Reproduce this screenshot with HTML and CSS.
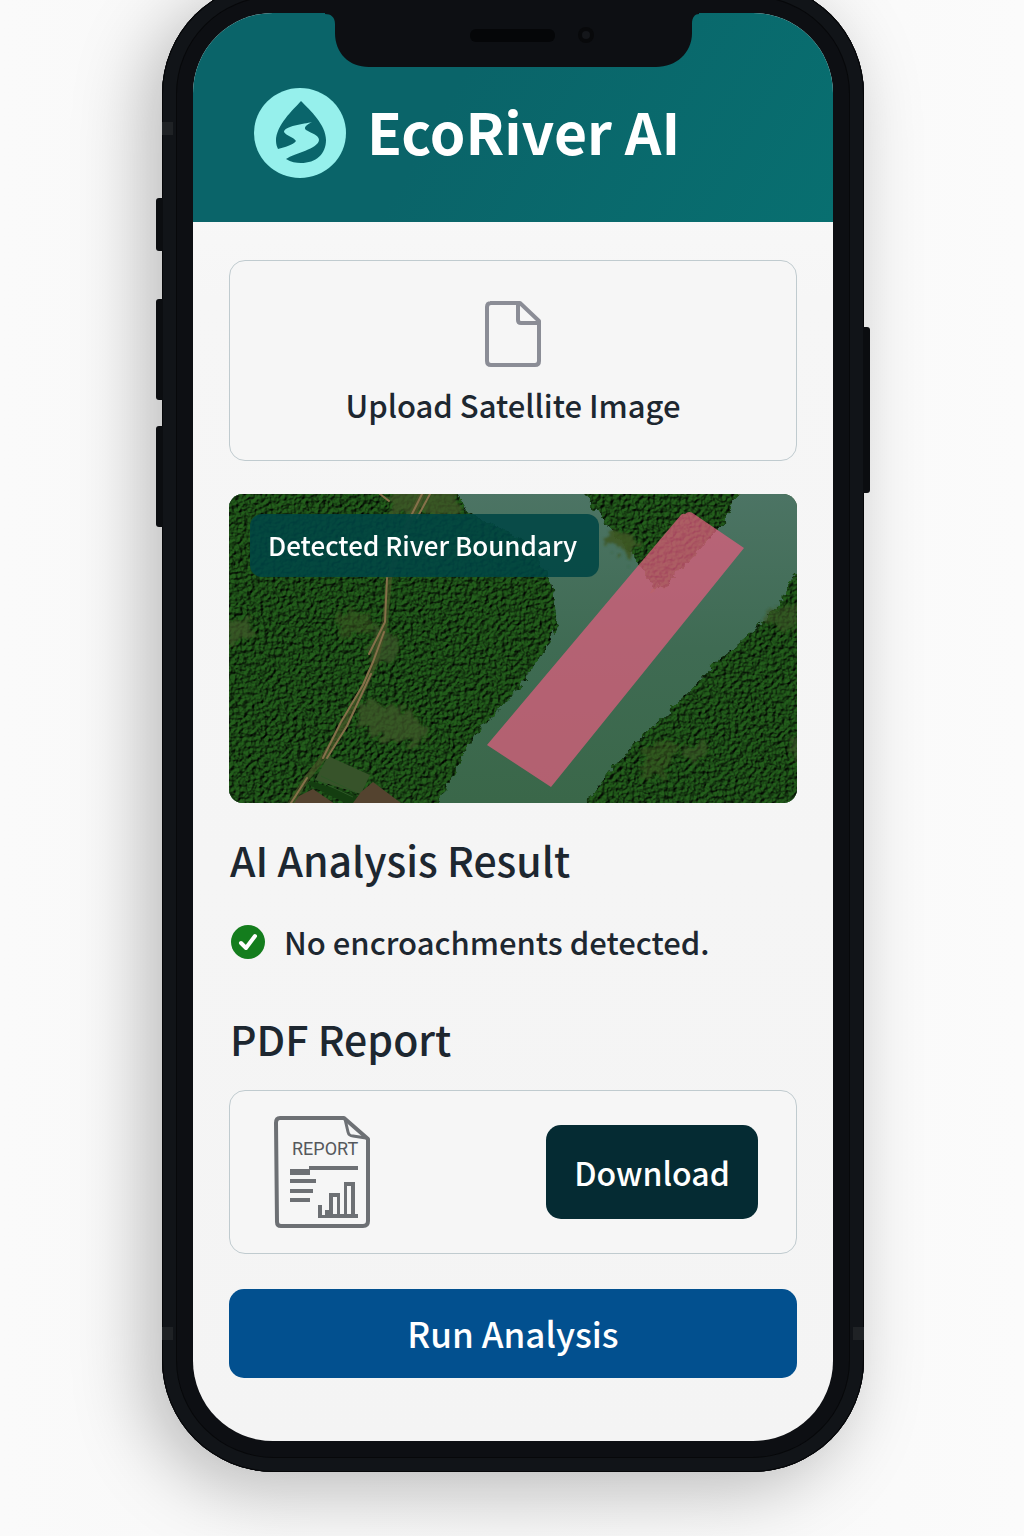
FILE: index.html
```html
<!DOCTYPE html>
<html lang="en">
<head>
<meta charset="utf-8">
<meta name="viewport" content="width=device-width, initial-scale=1">
<title>EcoRiver AI</title>
<link rel="stylesheet" href="styles.css">
</head>
<body>
<div class="phone">
  <span class="key key-mute"></span>
  <span class="key key-up"></span>
  <span class="key key-down"></span>
  <span class="key key-power"></span>
  <span class="band band-top"></span>
  <span class="band band-bottom"></span>
  <span class="band band-right"></span>
  <div class="screen">
    <svg class="notch" viewBox="0 0 374 56" aria-hidden="true">
      <path d="M0 0V1C6 1 10 4 10 11V20C10 40 24 54 44 54H331C351 54 367 40 367 20V11C367 4 370 1 374 1V0Z" fill="#0d0f13"/>
      <rect x="145" y="16" width="85" height="13" rx="6" fill="#050608"/>
      <circle cx="261" cy="22" r="8" fill="#08090b"/>
      <circle cx="261" cy="22" r="4" fill="#14161a"/>
    </svg>
    <header class="header">
      <svg class="logo" viewBox="0 0 94 92" aria-hidden="true">
        <ellipse cx="47" cy="46" rx="46" ry="45" fill="#96f0ec"/>
        <path d="M48 14C40 23 23 38 23 54C23 57 24 60 25 62C32 60 40 58 43 54C41 50 33 49 31 45C31 39 51 37 59 35C54 38 50 40 53 43C58 46 66 48 66 53C65 62 42 66 33 72C38 75 43 76 48 76C63 76 73 67 73 53C73 38 57 23 48 14Z" fill="#0a656b"/>
      </svg>
      <h1 class="brand">EcoRiver AI</h1>
    </header>
    <main class="content">
      <label class="card upload">
        <input class="upload-input" type="file" accept="image/*">
        <svg class="upload-icon" viewBox="0 0 58 68" fill="none" stroke="#8b8d96" stroke-width="4" stroke-linejoin="round" aria-hidden="true">
          <path d="M6 3H36L55 21V61Q55 65 51 65H7Q3 65 3 61V7Q3 3 7 3"/>
          <path d="M34 3V20Q34 23 37 23H54"/>
        </svg>
        <span>Upload Satellite Image</span>
      </label>

      <figure class="map">
        <svg class="map-image" viewBox="0 0 568 309" preserveAspectRatio="xMidYMid slice" role="img" aria-label="Satellite view of the river">
          <defs>
            <filter id="canopy" x="0" y="0" width="100%" height="100%" color-interpolation-filters="sRGB">
              <feTurbulence type="fractalNoise" baseFrequency="0.24" numOctaves="4" seed="8" result="noise"/>
              <feColorMatrix in="noise" type="matrix" values="0 0 0 0 0  0 0 0 0 0  0 0 0 0 0  1 0 0 0 0" result="bump"/>
              <feDiffuseLighting in="bump" surfaceScale="3" lighting-color="#ffffff" result="light"><feDistantLight azimuth="225" elevation="50"/></feDiffuseLighting>
              <feComposite in="SourceGraphic" in2="light" operator="arithmetic" k1="1.3" result="lit"/>
              <feComposite in="lit" in2="SourceGraphic" operator="in"/>
            </filter>
            <filter id="rough" x="-10%" y="-10%" width="120%" height="120%">
              <feTurbulence type="fractalNoise" baseFrequency="0.12" numOctaves="3" seed="3"/>
              <feDisplacementMap in="SourceGraphic" scale="10" xChannelSelector="R" yChannelSelector="G"/>
            </filter>
            <filter id="patch" x="-20%" y="-20%" width="140%" height="140%">
              <feTurbulence type="fractalNoise" baseFrequency="0.1" numOctaves="3" seed="5"/>
              <feDisplacementMap in="SourceGraphic" scale="22" xChannelSelector="R" yChannelSelector="G"/>
              <feGaussianBlur stdDeviation="1"/>
            </filter>
            <linearGradient id="water" x1="0" y1="0" x2="0" y2="1">
              <stop offset="0" stop-color="#4c7464"/><stop offset="0.5" stop-color="#3f6b53"/><stop offset="1" stop-color="#3a6749"/>
            </linearGradient>
          </defs>
          <rect width="568" height="309" fill="url(#water)"/>
          <g filter="url(#rough)" fill="none" stroke="#52703f" stroke-width="3">
            <path d="M326 128L314 154L278 204L244 238L224 274L194 312"/>
            <path d="M421 96L434 91L471 51L491 28L510 -4"/>
          </g>
          <g filter="url(#canopy)"><g filter="url(#rough)" fill="#1b4c14">
            <path d="M-20 -20H218L238 17L300 50L321 83L330 128L318 154L282 204L248 238L228 274L198 330H-20Z"/>
            <path d="M349 -20L355 1L378 31L408 68L425 96L438 91L475 51L495 28L519 -20Z"/>
            <path d="M590 60L566 81L551 108L528 134L488 168L454 204L411 244L381 278L340 330H590Z"/>
          </g></g>
          <g filter="url(#patch)" fill="#3d5626">
            <path d="M166 -8H225L232 20H160Z" opacity=".8"/>
            <path d="M0 122L20 126L24 144L0 148Z" opacity=".75"/>
            <path d="M106 118L144 118L146 138L112 142Z" opacity=".5"/>
            <path d="M148 130L170 146L162 168L140 166Z" opacity=".7"/>
            <path d="M132 206L186 218L200 250L158 246L128 232Z" opacity=".75"/>
            <path d="M374 44L392 34L412 50L400 66Z" opacity=".9"/>
            <path d="M536 116L568 110V136L540 130Z" opacity=".6"/>
            <path d="M414 258L438 242L450 258L436 282L414 284Z" opacity=".5"/>
            <path d="M450 252L480 250L476 264L456 266Z" opacity=".6"/>
            <path d="M558 254L568 244V270Z" opacity=".7"/>
          </g>
          <path d="M99 262L141 281L132 300L86 286Z" fill="#37532a"/>
          <path d="M82 287L132 303L122 312L78 290Z" fill="#143d10"/>
          <path d="M92 282L128 299M88 286L124 303" stroke="#2d5726" fill="none"/>
          <path d="M70 302L84 295L106 310H64Z" fill="#54432f"/>
          <path d="M132 298L144 288L172 309H124Z" fill="#54432f"/>
          <g fill="none" stroke="#86704a" stroke-linecap="round" stroke-linejoin="round">
            <path d="M193 0L178 32L160 84L156 128L146 168L136 191L112 236L94 264L78 284L62 309" stroke="#4f5529" stroke-width="6" opacity=".6"/>
            <path d="M193 0L182 22M201 0L188 24M158 84L156 128L140 160M155 138L144 168L134 191L112 228L94 264M142 180L118 232L98 264M78 284L62 309M151 0L160 7" stroke-width="2"/>
          </g>
          <path d="M456 20Q460 16 465 20L515 54L322 293L258 251L451 22Q453 19 456 20Z" fill="#e25e7f" fill-opacity=".72"/>
        </svg>
        <figcaption class="map-label">Detected River Boundary</figcaption>
      </figure>

      <section class="result">
        <h2 class="title">AI Analysis Result</h2>
        <p class="status">
          <svg class="status-icon" viewBox="0 0 36 36" aria-hidden="true">
            <circle cx="18" cy="18" r="17" fill="#147d1d"/>
            <path d="M11 19L16 24L25 12" fill="none" stroke="#fff" stroke-width="4" stroke-linecap="round" stroke-linejoin="round"/>
          </svg>
          <span>No encroachments detected.</span>
        </p>
      </section>

      <section class="report">
        <h2 class="title">PDF Report</h2>
        <div class="card report-card">
          <svg class="report-icon" viewBox="0 0 98 114" aria-hidden="true">
            <g fill="none" stroke="#6d7074" stroke-width="4" stroke-linejoin="round">
              <path d="M7 3H71L95 24V106Q95 111 90 111H8Q4 111 4 107L3 8Q3 3 7 3Z"/>
              <path d="M72 4L75 17Q76 21 80 21L93 23" stroke-width="3"/>
            </g>
            <text class="report-text" x="19" y="40">REPORT</text>
            <g fill="#6d7074">
              <path d="M17 54H36V51H85V55H37V60H17Z"/>
              <path d="M17 64H43V68H17ZM17 74H40V78H17ZM17 83H37V87H17Z"/>
              <path fill-rule="evenodd" d="M45 90H49V100H52V95H56V78H67V99H71V67H82V99H85V103H45ZM60 82V99H64V82ZM74 71V99H78V71Z"/>
            </g>
          </svg>
          <button class="button download" type="button">Download</button>
        </div>
      </section>

      <button class="button run" type="button">Run Analysis</button>
    </main>
  </div>
</div>
</body>
</html>
```
FILE: styles.css
```css
* {
  box-sizing: border-box;
}

body {
  margin: 0;
  min-height: 100vh;
  padding: 0 15px 64px 17px;
  overflow-x: hidden;
  background: linear-gradient(90deg, #fafafa, #f7f7f7 50%, #fbfbfb);
  color: #1d2730;
  font-family: "Noto Sans CJK JP", "Noto Sans", sans-serif;
}

.phone {
  position: relative;
  max-width: 702px;
  margin: -18px auto 0;
  padding: 31px;
  border-radius: 112px;
  background: #0d0f13;
  box-shadow:
    inset 0 0 0 1px #050608,
    inset 0 0 0 14px #111418,
    inset 0 0 0 15px #07080a,
    -16px 16px 72px rgba(0, 0, 0, 0.26);
}

.key {
  position: absolute;
  left: -6px;
  width: 7px;
  border-radius: 3px 0 0 3px;
  background: #0b0d10;
}

.key-mute {
  top: 216px;
  height: 53px;
}

.key-up {
  top: 317px;
  height: 101px;
}

.key-down {
  top: 444px;
  height: 101px;
}

.key-power {
  top: 345px;
  right: -6px;
  left: auto;
  height: 166px;
  border-radius: 0 3px 3px 0;
}

.band {
  position: absolute;
  left: 0;
  width: 11px;
  height: 13px;
  background: #1f2225;
}

.band-top {
  top: 140px;
}

.band-bottom,
.band-right {
  bottom: 132px;
}

.band-right {
  right: 0;
  left: auto;
}

.screen {
  position: relative;
  overflow: hidden;
  border-radius: 80px;
  background: linear-gradient(#fbfbfb, #f6f6f6 20%, #f4f4f4);
}

.notch {
  position: absolute;
  top: 0;
  left: 50%;
  width: 374px;
  height: 56px;
  margin-left: -188px;
}

.header {
  display: flex;
  align-items: center;
  gap: 20px;
  min-height: 209px;
  padding: 30px 60px 0;
  background: linear-gradient(120deg, #0a6469 40%, #086f70);
}

.logo {
  flex: none;
  width: 94px;
  height: 92px;
}

.brand {
  margin: 0;
  padding-bottom: 6px;
  color: #fff;
  font-size: 57px;
  font-weight: 700;
  line-height: 64px;
}

.content {
  display: flex;
  flex-direction: column;
  padding: 38px 36px 63px;
}

.card {
  border: 1px solid #c0cbcf;
  border-radius: 16px;
  background: #f6f6f6;
}

.upload {
  display: flex;
  flex-direction: column;
  align-items: center;
  gap: 17px;
  padding: 39px 16px 35px;
  font-size: 31px;
  font-weight: 500;
  line-height: 40px;
  cursor: pointer;
}

.upload-input {
  position: absolute;
  width: 1px;
  height: 1px;
  opacity: 0;
}

.upload-icon {
  width: 58px;
  height: 68px;
}

.map {
  position: relative;
  height: 309px;
  margin: 33px 0 0;
  overflow: hidden;
  border-radius: 14px;
  background: #1c4516;
}

.map-image {
  display: block;
  width: 100%;
  height: 100%;
}

.map-label {
  position: absolute;
  top: 20px;
  left: 21px;
  padding: 11px 22px 12px 18px;
  border-radius: 12px;
  background: rgba(0, 70, 68, 0.88);
  color: #fff;
  font-size: 26px;
  font-weight: 500;
  line-height: 40px;
}

.title {
  margin: 0;
  padding-left: 1px;
  font-size: 41px;
  font-weight: 500;
  line-height: 48px;
}

.result {
  padding-top: 32px;
}

.status {
  display: flex;
  align-items: center;
  gap: 18px;
  margin: 39px 0 0;
  padding-left: 1px;
  font-size: 31px;
  font-weight: 500;
  line-height: 40px;
}

.status-icon {
  flex: none;
  width: 36px;
  height: 36px;
}

.report {
  padding-top: 52px;
}

.report-card {
  display: flex;
  align-items: center;
  justify-content: space-between;
  min-height: 164px;
  margin-top: 28px;
  padding: 0 38px 0 43px;
}

.report-icon {
  width: 98px;
  height: 114px;
}

.report-text {
  fill: #55585c;
  font-family: Roboto, sans-serif;
  font-size: 18px;
}

.button {
  border: 0;
  border-radius: 15px;
  color: #fff;
  font: inherit;
  font-weight: 500;
  line-height: 40px;
  cursor: pointer;
}

.download {
  min-width: 212px;
  padding: 27px 16px;
  background: #052b33;
  font-size: 32px;
}

.run {
  margin-top: 35px;
  padding: 24px 16px 25px;
  background: #02508f;
  font-size: 35px;
}
```
